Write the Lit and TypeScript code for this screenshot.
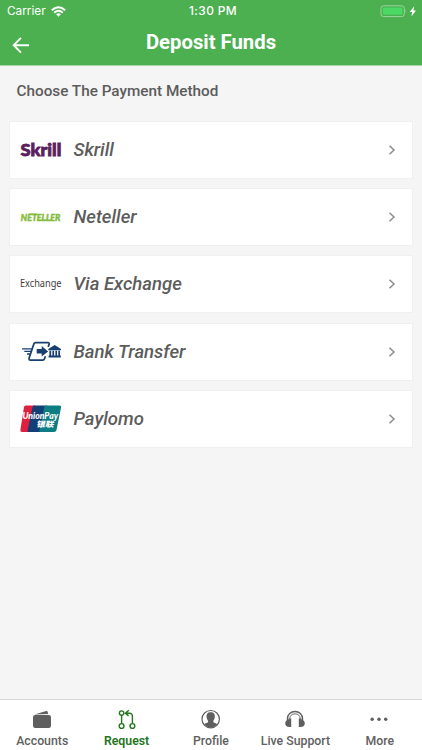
import { LitElement, html, svg, css } from "lit";
import { customElement, property } from "lit/decorators.js";

const logos: Record<string, unknown> = {
  Skrill: svg`<text x="0.5" y="22.2" textLength="40.8" lengthAdjust="spacingAndGlyphs" font-family="Lato" font-weight="900" font-size="16.8" fill="#5b1f5e" stroke="#5b1f5e" stroke-width=".8">Skrill</text>`,
  Neteller: svg`<text transform="translate(0.8 19.7) scale(1 .82)" textLength="39.5" lengthAdjust="spacingAndGlyphs" font-family="Lato" font-style="italic" font-weight="900" font-size="11.8" fill="#83ba3b" stroke="#83ba3b" stroke-width=".5">NETELLER</text>
    <path d="M9 13.2h8M17.5 19.2h15" stroke="#83ba3b" stroke-width="1.3"/>`,
  "Via Exchange": svg`<text x="0" y="19.2" textLength="41.5" lengthAdjust="spacingAndGlyphs" font-family="Noto Sans" font-size="10.2" fill="#3d3d3d">Exchange</text>`,
  "Bank Transfer": svg`<g fill="none" stroke="#173f70" stroke-width="1.7">
      <path d="M28.1 10.8l1-2.4q.5-1.7-1.2-1.7H15.6q-1.3 0-1.8 1.4L9.2 21.8q-.6 2.3 1.2 2.3h12.4q1.2 0 1.7-1.3l.9-2.5"/>
      <path d="M2 12.8h9.8M4.3 15.4h6.7M7 18h3" stroke-width="1.3"/></g>
    <path fill="#173f70" d="M16.7 12.9h5V9.9l6.4 5.5-6.4 5.2v-3.1h-5zM28.3 14.2V13L34.7 9l6.3 4v1.2zM29.4 14.8h1.8v4.6h-1.8zM32.4 14.8h1.7v4.6h-1.7zM35.4 14.8h1.7v4.6h-1.7zM38.3 14.8h1.7v4.6h-1.7zM28.6 19.5h12.2v1.9H28.6z"/>`,
  Paylomo: svg`<path fill="#de1f3e" d="M5 2.5h10L9 29H2Q0 29 .4 26.8L4 4q.2-1.5 2-1.5z"/>
    <path fill="#123f75" d="M14 2.5h13L21 29H8.3q-1 0-.7-1.4l5-23.6q.3-1.5 1.4-1.5z"/>
    <path fill="#0c7e83" d="M26 2.5h13.2q2.3 0 1.8 2.2L36.5 27q-.4 2-2.5 2H20q-1 0-.7-1.4l5-23.6q.3-1.5 1.7-1.5z"/>
    <text x="2.4" y="15.8" textLength="35.6" lengthAdjust="spacingAndGlyphs" font-family="Lato" font-weight="900" font-style="italic" font-size="9" fill="#fff">UnionPay</text>
    <text transform="translate(16.2 23.6) skewX(-12)" textLength="17.4" lengthAdjust="spacingAndGlyphs" font-family="Noto Sans CJK SC" font-weight="900" font-size="7.8" fill="#fff">银联</text>`,
};

const tabIcons: Record<string, unknown> = {
  Accounts: svg`<path fill="#5f5f5f" d="M4.5 6.6 16.2 3q1.2-.3 1.5.9l.5 2zM5.3 7.1h13.4q2.3 0 2.3 2.2v8.4q0 2.3-2.3 2.3H5.3Q3 20 3 17.7V9.3q0-2.2 2.3-2.2z"/>`,
  Request: svg`<g fill="none" stroke="#24761b" stroke-width="1.4"><circle cx="6.6" cy="5.1" r="2.2"/><circle cx="6.6" cy="18" r="2.4"/><circle cx="17.4" cy="18" r="2.4"/><path d="M6.6 7.2v8.4M17.4 15.6V8.2q0-2.9-3-2.9h-3.8M13.8 2.2l-3.4 3.1 3.2 2.6"/></g>`,
  Profile: svg`<circle cx="11.7" cy="11.2" r="8.7" fill="none" stroke="#5f5f5f" stroke-width="1.2"/><path fill="#5f5f5f" d="M11.7 4.3c3.3 0 4.4 2.1 4.1 4.8-.2 1.8-.9 2.7-1.4 3.6-.4 1.5.2 1.9 1.5 2.3 1.2.4 1.9.7 2.4 1.3a8.4 8.4 0 0 1-6.6 3.1 8.4 8.4 0 0 1-6.6-3.1c.5-.6 1.2-.9 2.4-1.3 1.3-.4 1.9-.8 1.5-2.3-.5-.9-1.2-1.8-1.4-3.6-.3-2.7.8-4.8 4.1-4.8z"/>`,
  "Live Support": svg`<g fill="none" stroke="#5f5f5f"><path d="M4.5 13V10.6C4.5 6.3 7.8 3.5 12 3.5s7.5 2.8 7.5 7.1V13" stroke-width="1.4"/><path d="M6.8 12v-1.5c0-2.8 2.1-4.7 5.2-4.7s5.2 1.9 5.2 4.7V12" stroke-width=".9"/></g><path fill="#5f5f5f" d="M8.2 10.5v8.4H6.5q-4.3 0-4.3-3.6 0-3 3.2-3.6v-1.2zM15.8 10.5v8.4h1.7q4.3 0 4.3-3.6 0-3-3.2-3.6v-1.2z"/>`,
  More: svg`<g fill="#5f5f5f"><circle cx="4.2" cy="11.3" r="1.7"/><circle cx="11" cy="11.3" r="1.7"/><circle cx="17.7" cy="11.3" r="1.7"/></g>`,
};

@customElement("payment-card")
export class PaymentCard extends LitElement {
  @property() name = "";
  static styles = css`
    :host { display: flex; align-items: center; box-sizing: border-box; height: 58px; padding: 0 15px 0 10px; background: #fff; border: 1px solid #f0f0f0; }
    .logo { width: 42px; height: 32px; flex: none; overflow: visible; }
    .name { flex: 1; margin-left: 11.5px; font: italic 500 18.55px/24px Roboto, sans-serif; color: #5c5c5c; white-space: nowrap; }
    .chevron { width: 10px; height: 12px; }
  `;
  render() {
    return html`<svg class="logo" viewBox="0 0 42 32">${logos[this.name]}</svg>
      <span class="name">${this.name}</span>
      <svg class="chevron" viewBox="0 0 10 12"><path d="M2.5 1.8 7 6l-4.5 4.2" fill="none" stroke="#8c8c8c" stroke-width="1.5"/></svg>`;
  }
}

@customElement("app-root")
export class AppRoot extends LitElement {
  static styles = css`
    :host { display: flex; flex-direction: column; height: 750px; background: #f5f5f5; font-family: Roboto, sans-serif; overflow: hidden; }
    header { height: 65px; flex: none; background: #4caf50; color: #fff; border-bottom: 1px solid #a5d6a7; }
    .status { display: grid; grid-template-columns: 1fr auto 1fr; align-items: center; height: 22px; padding: 0 5px 0 7px; font: 400 11.8px/22px Inter, sans-serif; }
    .carrier { display: flex; align-items: center; gap: 5.5px; }
    .wifi { width: 15px; height: 11px; }
    .time { font-weight: 500; font-size: 11.9px; letter-spacing: .4px; margin-left: 2px; }
    .battery { justify-self: end; width: 37px; height: 14px; margin-top: -1px; }
    .title { display: grid; grid-template-columns: 42px 1fr 42px; height: 43px; }
    .back { width: 18px; height: 18px; margin: 13.5px 0 0 12px; }
    h1 { margin: 6px 0 0; text-align: center; font: 700 20.3px/28px Roboto, sans-serif; }
    main { flex: 1; padding: 0 9px; }
    h2 { margin: 0 0 18px; padding: 14px 0 0 7.5px; font: 500 15.3px/23px Roboto, sans-serif; color: #5c5c5c; }
    .list { display: flex; flex-direction: column; gap: 9.2px; }
    nav { display: grid; grid-template-columns: repeat(5, 1fr); height: 50px; flex: none; background: #fff; border-top: 1px solid #d6d6d6; }
    .tab { display: flex; flex-direction: column; align-items: center; color: #606060; font: 500 12.3px/16px Roboto, sans-serif; white-space: nowrap; }
    .tab svg { width: 24px; height: 24px; margin: 8px 0 1px; }
    .tab.active { color: #24761b; font-weight: 600; }
  `;
  render() {
    return html`
      <header>
        <div class="status">
          <span class="carrier">Carrier
            <svg class="wifi" viewBox="0 0 15 11"><g fill="none" stroke="#fff" stroke-width="1.9"><path d="M.8 4.2q6.7-6.1 13.4 0M3.2 6.7q4.3-3.8 8.6 0"/></g><path fill="#fff" d="M5.1 8.2q2.4-1.9 4.8 0L7.5 10.7z"/></svg>
          </span>
          <span class="time">1:30 PM</span>
          <svg class="battery" viewBox="0 0 37 14"><rect x="1" y="1.8" width="23.3" height="10.8" rx="2.5" fill="none" stroke="#9bd79d"/><rect x="2.8" y="3.6" width="19.7" height="7.2" rx="1.2" fill="#4bd864"/><path d="M25.6 5.2q1.5 1.9 0 3.9z" fill="#9bd79d"/><path d="M34.2 2.2 29.7 8h2.5l-.8 4.5L36 6.6h-2.6z" fill="#fff"/></svg>
        </div>
        <div class="title">
          <svg class="back" viewBox="0 0 18 18"><path d="M17 9.2H2.2M9 1.8 1.7 9.2 9 16.6" fill="none" stroke="#fff" stroke-width="1.9"/></svg>
          <h1>Deposit Funds</h1>
        </div>
      </header>
      <main>
        <h2>Choose The Payment Method</h2>
        <div class="list">${Object.keys(logos).map((name) => html`<payment-card .name=${name}></payment-card>`)}</div>
      </main>
      <nav>${Object.keys(tabIcons).map((name) => html`<div class="tab ${name === "Request" ? "active" : ""}"><svg viewBox="0 0 24 24">${tabIcons[name]}</svg>${name}</div>`)}</nav>`;
  }
}
